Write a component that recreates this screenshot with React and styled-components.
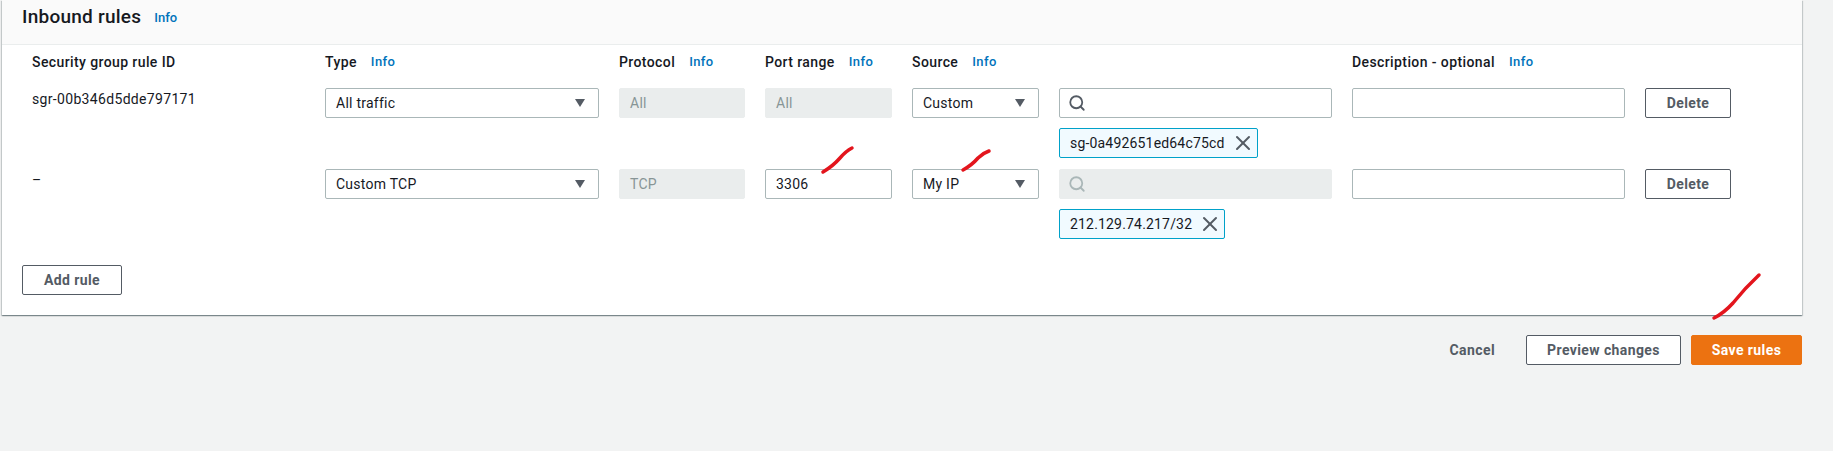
import React from 'react';
import styled, { createGlobalStyle } from 'styled-components';
import { Search, X } from 'lucide-react';

const GlobalStyle = createGlobalStyle`
  html, body {
    margin: 0;
    height: 451px;
    overflow: hidden;
    background: #f2f3f3;
    font-family: Roboto, "Noto Sans", sans-serif;
    color: #16191f;
  }
`;

const Page = styled.div`
  position: relative;
  width: 1833px;
  height: 451px;
  padding: 0 31px 0 2px;
  box-sizing: border-box;
`;

const Panel = styled.section`
  background: #fff;
  box-shadow: 0 1px 1px 0 rgba(0, 28, 36, 0.3), 1px 1px 1px 0 rgba(0, 28, 36, 0.15), -1px 1px 1px 0 rgba(0, 28, 36, 0.15);
  height: 315px;
`;

const PanelHeader = styled.header`
  height: 45px;
  box-sizing: border-box;
  background: #fafafa;
  border-bottom: 1px solid #eaeded;
  padding: 5px 20px 0;
  display: flex;
  align-items: flex-start;
  gap: 13px;
`;

const Title = styled.h2`
  margin: 0;
  font-size: 19px;
  line-height: 24px;
  font-weight: 500;
  letter-spacing: 0.25px;
`;

const InfoLink = styled.a`
  font-size: 13px;
  line-height: 16px;
  font-weight: 500;
  color: #0073bb;
`;

const HeaderInfo = styled(InfoLink)`
  margin-top: 5px;
`;

const PanelBody = styled.div`
  padding: 7px 30px 0 30px;
`;

const Columns = styled.div`
  display: grid;
  grid-template-columns: 273px 274px 126px 127px 127px 273px 273px 86px;
  column-gap: 20px;
  align-items: start;
`;

const LabelRow = styled(Columns)`
  height: 36px;
`;

const RuleRow = styled(Columns)`
  margin-bottom: 11px;
`;

const LastRuleRow = styled(RuleRow)`
  margin-bottom: 26px;
`;

const ColumnLabel = styled.div`
  display: flex;
  align-items: center;
  gap: 14px;
  font-size: 14px;
  line-height: 20px;
  font-weight: 500;
  letter-spacing: 0.4px;
`;

const RuleId = styled.div`
  font-size: 14px;
  line-height: 22px;
  letter-spacing: 0.33px;
`;

const Field = styled.div`
  height: 30px;
  box-sizing: border-box;
  display: flex;
  align-items: center;
  justify-content: space-between;
  padding: 0 10px;
  font-size: 14px;
  letter-spacing: 0.25px;
  border-radius: 2px;
  border: 1px solid ${props => (props.$disabled ? '#eaeded' : '#aab7b8')};
  background: ${props => (props.$disabled ? '#eaeded' : '#fff')};
  color: ${props => (props.$disabled ? '#879596' : '#16191f')};
`;

const SearchField = styled(Field)`
  justify-content: flex-start;
  color: ${props => (props.$disabled ? '#aab7b8' : '#545b64')};
`;

const SearchIcon = styled(Search)`
  margin-left: -2px;
`;

const Caret = styled.svg`
  width: 10px;
  height: 8px;
  fill: #545b64;
  margin-right: 3px;
`;

const Tag = styled.div`
  display: inline-flex;
  align-items: center;
  gap: 12px;
  height: 30px;
  box-sizing: border-box;
  margin-top: 10px;
  padding: 0 8px 0 10px;
  border: 1px solid #00a1c9;
  border-radius: 2px;
  background: #f1faff;
  font-size: 14px;
  letter-spacing: 0.18px;
  color: #16191f;
`;

const TagClose = styled(X)`
  color: #545b64;
  margin: 0 -6px;
`;

const Button = styled.button`
  height: 30px;
  box-sizing: border-box;
  padding: 0;
  border: 1px solid #545b64;
  border-radius: 2px;
  background: #fff;
  color: #545b64;
  font-family: inherit;
  font-size: 14px;
  font-weight: 700;
  letter-spacing: 0.4px;
`;

const DeleteButton = styled(Button)`
  width: 86px;
`;

const AddButton = styled(Button)`
  width: 100px;
  margin-left: -10px;
`;

const Footer = styled.footer`
  display: flex;
  justify-content: flex-end;
  align-items: center;
  gap: 10px;
  margin-top: 20px;
`;

const CancelButton = styled(Button)`
  border-color: transparent;
  background: transparent;
  margin-right: 20px;
`;

const PreviewButton = styled(Button)`
  width: 155px;
`;

const SaveButton = styled(Button)`
  width: 111px;
  background: #ec7211;
  border-color: #ec7211;
  color: #fff;
`;

// hand drawn marks lying over the form
const Scribbles = styled.svg`
  position: absolute;
  top: 0;
  left: 0;
  pointer-events: none;
`;

const Scribble = styled.path`
  fill: none;
  stroke: #e3151d;
  stroke-width: 3.5;
  stroke-linecap: round;
`;

const Labeled = ({ children }) => (
  <ColumnLabel>
    <span>{children}</span>
    <InfoLink>Info</InfoLink>
  </ColumnLabel>
);

const Select = ({ value }) => (
  <Field>
    <span>{value}</span>
    <Caret viewBox="0 0 10 8"><path d="M0 0h10L5 8z" /></Caret>
  </Field>
);

const Rule = ({ as: Row = RuleRow, rule }) => (
  <Row>
    <RuleId>{rule.id}</RuleId>
    <Select value={rule.type} />
    <Field $disabled>{rule.protocol}</Field>
    <Field $disabled={rule.portDisabled}>{rule.port}</Field>
    <Select value={rule.source} />
    <div>
      <SearchField $disabled={rule.searchDisabled}>
        <SearchIcon size={18} strokeWidth={2.4} />
      </SearchField>
      <Tag>
        {rule.tag}
        <TagClose size={24} strokeWidth={2} />
      </Tag>
    </div>
    <Field />
    <DeleteButton>Delete</DeleteButton>
  </Row>
);

const rules = [
  { id: 'sgr-00b346d5dde797171', type: 'All traffic', protocol: 'All', port: 'All', portDisabled: true, source: 'Custom', tag: 'sg-0a492651ed64c75cd' },
  { id: '–', type: 'Custom TCP', protocol: 'TCP', port: '3306', source: 'My IP', searchDisabled: true, tag: '212.129.74.217/32' },
];

const App = () => (
  <Page>
    <GlobalStyle />
    <Panel>
      <PanelHeader>
        <Title>Inbound rules</Title>
        <HeaderInfo>Info</HeaderInfo>
      </PanelHeader>
      <PanelBody>
        <LabelRow>
          <ColumnLabel>Security group rule ID</ColumnLabel>
          <Labeled>Type</Labeled>
          <Labeled>Protocol</Labeled>
          <Labeled>Port range</Labeled>
          <Labeled>Source</Labeled>
          <div />
          <Labeled>Description - optional</Labeled>
        </LabelRow>
        <Rule rule={rules[0]} />
        <Rule as={LastRuleRow} rule={rules[1]} />
        <AddButton>Add rule</AddButton>
      </PanelBody>
    </Panel>
    <Footer>
      <CancelButton>Cancel</CancelButton>
      <PreviewButton>Preview changes</PreviewButton>
      <SaveButton>Save rules</SaveButton>
    </Footer>
    <Scribbles width="1833" height="451">
      <Scribble d="M823 172 Q833 166 840 158 Q846 151 852 148" />
      <Scribble d="M963 170 Q972 165 978 158 Q983 153 989 151" />
      <Scribble d="M1714 318 Q1724 313 1733 303 Q1745 288 1759 275" />
    </Scribbles>
  </Page>
);

export default App;
